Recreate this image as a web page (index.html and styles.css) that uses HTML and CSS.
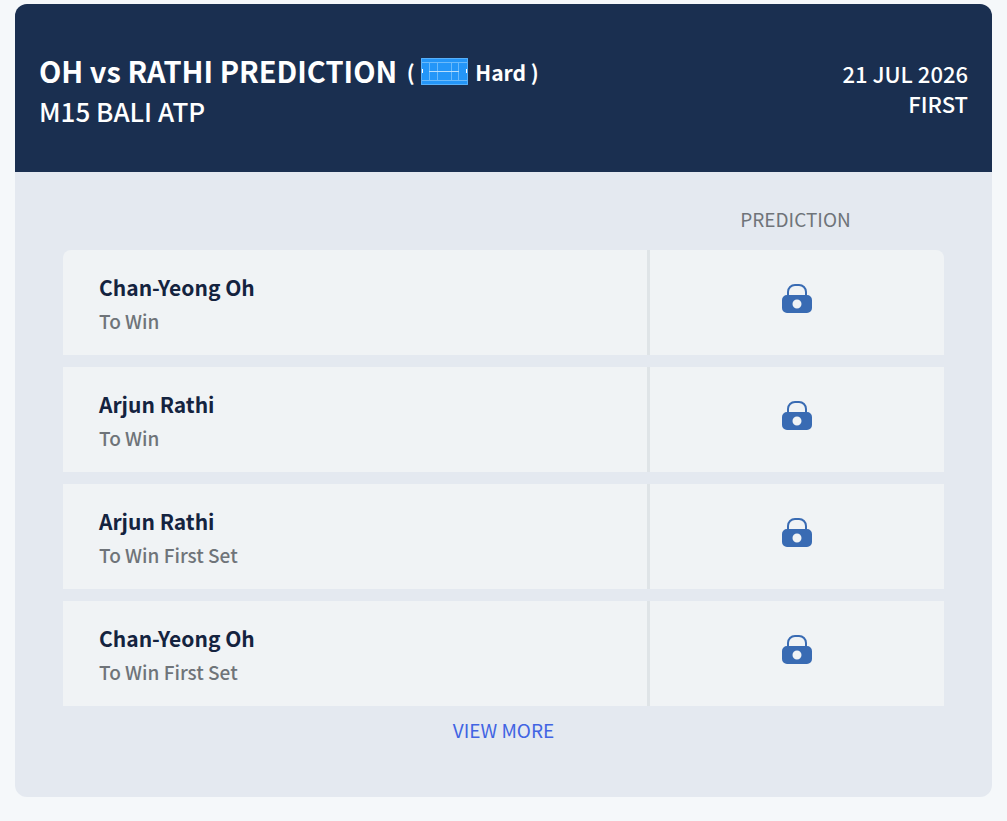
FILE: index.html
```html
<!DOCTYPE html>
<html lang="en">
<head>
    <meta charset="UTF-8">
    <title>OH vs RATHI PREDICTION</title>
    <link rel="stylesheet" href="styles.css">
</head>
<body>
<svg class="symbols" width="0" height="0">
    <symbol id="lock" viewBox="0 0 30 30">
        <path d="M6 13V8a7 7 0 0 1 7-7h4a7 7 0 0 1 7 7v5" fill="none" stroke="#396bb3" stroke-width="2"/>
        <path fill="#396bb3" fill-rule="evenodd" d="M5 11h20a5 5 0 0 1 5 5v8a5 5 0 0 1-5 5H5a5 5 0 0 1-5-5v-8a5 5 0 0 1 5-5zM15 15.500a4.500 4.500 0 1 0 0 9a4.500 4.500 0 1 0 0-9z"/>
    </symbol>
</svg>
<div class="card">
    <div class="card-header">
        <div class="match">
            <h1>OH vs RATHI PREDICTION
                <span class="surface">(
                    <svg class="court" viewBox="0 0 47 27">
                        <rect width="47" height="27" fill="#2496f8"/>
                        <g fill="none" stroke="#6bbafb">
                            <path stroke="#57b0fa" d="M.5.500h46v26H.5z"/>
                            <path d="M1 4.500h45M1 22.500h45M8.500 4v19M16.500 4v19M30.500 4v19M37.500 4v19"/>
                            <path stroke="#b5ddfd" d="M8 13.500h30"/>
                        </g>
                        <path fill="#fff" d="M1 11h1v4H1zM45 11h1v4h-1z"/>
                    </svg>
                    Hard )</span>
            </h1>
            <h2>M15 BALI ATP</h2>
        </div>
        <div class="date">
            <p>21 JUL 2026</p>
            <p>FIRST</p>
        </div>
    </div>
    <div class="card-body">
        <table class="list">
            <thead>
            <tr>
                <td></td>
                <th class="pick">PREDICTION</th>
            </tr>
            </thead>
            <tbody>
            <tr>
                <td><p class="name">Chan-Yeong Oh</p><p class="market">To Win</p></td>
                <td class="pick"><svg class="lock"><use href="#lock"/></svg></td>
            </tr>
            <tr>
                <td><p class="name">Arjun Rathi</p><p class="market">To Win</p></td>
                <td class="pick"><svg class="lock"><use href="#lock"/></svg></td>
            </tr>
            <tr>
                <td><p class="name">Arjun Rathi</p><p class="market">To Win First Set</p></td>
                <td class="pick"><svg class="lock"><use href="#lock"/></svg></td>
            </tr>
            <tr>
                <td><p class="name">Chan-Yeong Oh</p><p class="market">To Win First Set</p></td>
                <td class="pick"><svg class="lock"><use href="#lock"/></svg></td>
            </tr>
            </tbody>
        </table>
        <a class="more" href="#">VIEW MORE</a>
    </div>
</div>
</body>
</html>
```

FILE: styles.css
```css
* {
    margin: 0;
    padding: 0;
    box-sizing: border-box;
}

body {
    padding: 4px 15px 24px;
    background-color: #f5f8fa;
    font-family: "Noto Sans CJK SC", "Noto Sans", sans-serif;
}

.symbols {
    position: absolute;
}

.card {
    border-radius: 12px;
    overflow: hidden;
    background-color: #e4e9f0;
}

.card-header {
    display: flex;
    justify-content: space-between;
    align-items: center;
    padding: 45px 24px 41px;
    background-color: #1a2f50;
    color: #fff;
}

h1 {
    font-size: 29px;
    line-height: 42px;
    font-weight: 700;
}

h2 {
    font-size: 26px;
    line-height: 40px;
    font-weight: 500;
}

.surface {
    margin-left: 3px;
    font-size: 21px;
    line-height: 30px;
    vertical-align: 2px;
}

.court {
    width: 47px;
    height: 27px;
    margin: 0 2px;
    vertical-align: -4px;
}

.date {
    padding-bottom: 4px;
    font-size: 22px;
    line-height: 30px;
    font-weight: 500;
    text-align: right;
}

.card-body {
    padding: 24px 48px 55px;
}

.list {
    width: 100%;
    table-layout: fixed;
    border-collapse: separate;
    border-spacing: 0 12px;
    margin-top: -12px;
}

.list th {
    height: 42px;
    padding-top: 4px;
    font-size: 19px;
    line-height: 38px;
    font-weight: 400;
    color: #6f7479;
}

.list .pick {
    width: 297px;
    text-align: center;
}

.list tbody td {
    height: 105px;
    padding: 2px 36px 0;
    background-color: #f0f3f5;
}

.list tbody .pick {
    padding: 0 36px 8px;
    border-left: 3px solid #dfe4e7;
}

.list tbody tr:first-child td:first-child {
    border-top-left-radius: 8px;
}

.list tbody tr:first-child td:last-child {
    border-top-right-radius: 8px;
}

.name {
    font-size: 21px;
    line-height: 34px;
    font-weight: 600;
    color: #14233f;
}

.market {
    font-size: 19px;
    line-height: 34px;
    font-weight: 500;
    color: #6f7479;
}

.lock {
    display: block;
    width: 30px;
    height: 30px;
    margin: 0 auto;
}

.more {
    display: block;
    text-align: center;
    font-size: 19px;
    line-height: 24px;
    color: #4164e3;
    text-decoration: none;
}
```
